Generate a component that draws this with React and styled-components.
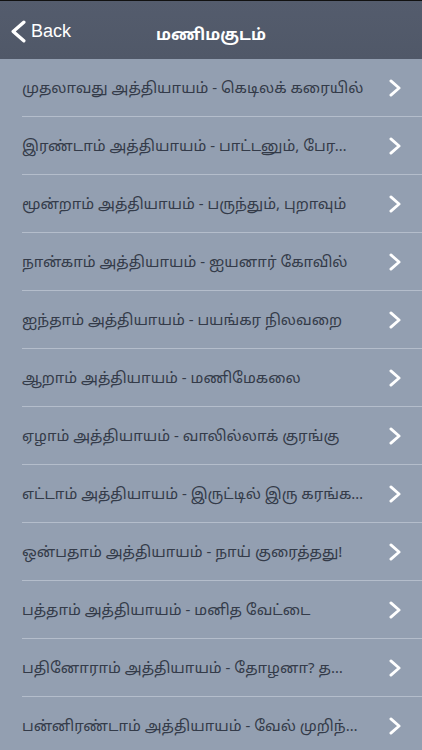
import React from 'react';
import styled, { createGlobalStyle } from 'styled-components';

const chapters = [
  'முதலாவது அத்தியாயம் - கெடிலக் கரையில்',
  'இரண்டாம் அத்தியாயம் - பாட்டனும், பேரனும்',
  'மூன்றாம் அத்தியாயம் - பருந்தும், புறாவும்',
  'நான்காம் அத்தியாயம் - ஐயனார் கோவில்',
  'ஐந்தாம் அத்தியாயம் - பயங்கர நிலவறை',
  'ஆறாம் அத்தியாயம் - மணிமேகலை',
  'ஏழாம் அத்தியாயம் - வாலில்லாக் குரங்கு',
  'எட்டாம் அத்தியாயம் - இருட்டில் இரு கரங்கள்',
  'ஒன்பதாம் அத்தியாயம் - நாய் குரைத்தது!',
  'பத்தாம் அத்தியாயம் - மனித வேட்டை',
  'பதினோராம் அத்தியாயம் - தோழனா? தலைவனா?',
  'பன்னிரண்டாம் அத்தியாயம் - வேல் முறிந்தது',
];

const GlobalStyle = createGlobalStyle`
  body {
    margin: 0;
    background: #939fb1;
    font-family: "Noto Sans", "Noto Sans Tamil", "Liberation Sans", sans-serif;
  }
`;

const Screen = styled.div`
  width: 422px;
  height: 750px;
  overflow: hidden;
  background: #939fb1;
`;

const NavBar = styled.div`
  height: 55px;
  padding-top: 3px;
  box-sizing: content-box;
  border-top: 1px solid #111;
  background: linear-gradient(#545c6d, #505868);
  display: grid;
  grid-template-columns: 100px 1fr 100px;
  align-items: center;
`;

const BackButton = styled.div`
  display: flex;
  align-items: center;
  gap: 5px;
  padding-left: 11px;
  color: #fff;
  font-family: "Liberation Sans", Arial, sans-serif;
  font-size: 18px;
`;

const Title = styled.div`
  text-align: center;
  padding-top: 5px;
  color: #fff;
  font-weight: bold;
  font-size: 16px;
`;

const List = styled.div`
  display: flex;
  flex-direction: column;
`;

const Separator = styled.div`
  height: 1px;
  margin-left: 22px;
  background: #b4bdcb;
`;

const ListRow = styled.div`
  height: 57px;
  display: flex;
  align-items: center;
  padding: 0 21px 0 22px;
`;

const Label = styled.div`
  width: 344px;
  white-space: nowrap;
  overflow: hidden;
  text-overflow: ellipsis;
  color: #343b49;
  font-size: 15px;
`;

const Accessory = styled.div`
  margin-left: auto;
  display: flex;
  align-items: center;
`;

const Chevron = ({ w, h, stroke = '#fff', sw, flip }) => (
  <svg width={w} height={h} viewBox={`0 0 ${w} ${h}`}>
    <path
      d={flip
        ? `M${w - sw / 2 - 0.5} ${sw / 2 + 0.5} L${sw / 2 + 0.5} ${h / 2} L${w - sw / 2 - 0.5} ${h - sw / 2 - 0.5}`
        : `M${sw / 2 + 0.5} ${sw / 2 + 0.5} L${w - sw / 2 - 0.5} ${h / 2} L${sw / 2 + 0.5} ${h - sw / 2 - 0.5}`}
      fill="none"
      stroke={stroke}
      strokeWidth={sw}
      strokeLinecap="round"
      strokeLinejoin="round"
    />
  </svg>
);

export default function App() {
  return (
    <Screen>
      <GlobalStyle />
      <NavBar>
        <BackButton>
          <Chevron w={15} h={23} sw={3.4} flip />
          Back
        </BackButton>
        <Title>மணிமகுடம்</Title>
        <div />
      </NavBar>
      <List>
        {chapters.map((c, i) => (
          <React.Fragment key={i}>
            {i > 0 && <Separator />}
            <ListRow>
              <Label>{c}</Label>
              <Accessory>
                <Chevron w={12} h={18} sw={2.8} />
              </Accessory>
            </ListRow>
          </React.Fragment>
        ))}
      </List>
    </Screen>
  );
}
